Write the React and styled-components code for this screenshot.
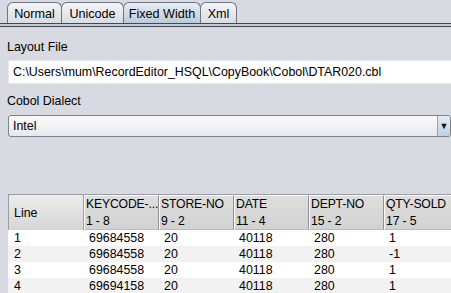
import React from 'react'
import styled, { createGlobalStyle } from "styled-components"

const tabs = ["Normal", "Unicode", "Fixed Width", "Xml"]
const tabWidths = [55, 63, 78, 37]

const columns = [
    { name: "KEYCODE-...", pos: "1 - 8" },
    { name: "STORE-NO", pos: "9 - 2" },
    { name: "DATE", pos: "11 - 4" },
    { name: "DEPT-NO", pos: "15 - 2" },
    { name: "QTY-SOLD", pos: "17 - 5" },
]

const rows = [
    ["1", "69684558", "20", "40118", "280", "1"],
    ["2", "69684558", "20", "40118", "280", "-1"],
    ["3", "69684558", "20", "40118", "280", "1"],
    ["4", "69694158", "20", "40118", "280", "1"],
]

export default function App() {
  return (
    <Page>
        <GlobalStyle />
        <TabBar>
            {tabs.map((t, i) => (
                <Tab key={t} $active={t === "Fixed Width"} $w={tabWidths[i]}>{t}</Tab>
            ))}
        </TabBar>
        <TabLine />
        <Content>
            <Label>Layout File</Label>
            <TextField>C:\Users\mum\RecordEditor_HSQL\CopyBook\Cobol\DTAR020.cbl</TextField>
            <Label $gap={9}>Cobol Dialect</Label>
            <Combo>
                <ComboText>Intel</ComboText>
                <ComboButton>▼</ComboButton>
            </Combo>
            <Table>
                <HeaderRow>
                    <LineHeader>Line</LineHeader>
                    {columns.map((c) => (
                        <ColHeader key={c.name}>
                            <span>{c.name}</span>
                            <span>{c.pos}</span>
                        </ColHeader>
                    ))}
                </HeaderRow>
                {rows.map((r, i) => (
                    <Row key={i} $odd={i % 2 === 1}>
                        {r.map((v, j) => (
                            <Cell key={j} $first={j === 0}>{v}</Cell>
                        ))}
                    </Row>
                ))}
            </Table>
        </Content>
    </Page>
  )
}

const GlobalStyle = createGlobalStyle`
    body {
        margin : 0;
        background : #d7dae0;
        font-family : "Liberation Sans", Arial, sans-serif;
        font-size : 12.4px;
        color : #000;
    }
`
const Page = styled.div`
    width : 451px;
    height : 293px;
    overflow : hidden;
    background : #d7dae0;
`
const TabBar = styled.div`
    display : flex;
    align-items : flex-end;
    height : 23px;
    padding-left : 7px;
`
const Tab = styled.div`
    width : ${(p) => p.$w}px;
    height : 21px;
    box-sizing : border-box;
    display : flex;
    align-items : center;
    justify-content : center;
    padding-top : 1px;
    border : 1px solid #6f7580;
    border-bottom : none;
    border-radius : 6px 6px 0 0;
    margin-right : -1px;
    font-size : 12.6px;
    background : ${(p) => p.$active
        ? "linear-gradient(#e6ecf3, #bccad9)"
        : "linear-gradient(#f4f5f7, #d9dce1)"};
`
const TabLine = styled.div`
    height : 2px;
    border-top : 1px solid #434852;
    border-bottom : 1px solid #434852;
    background : #c3cdda;
`
const Content = styled.div`
    padding : 12px 0 0 8px;
`
const Label = styled.div`
    height : 16px;
    line-height : 16px;
    margin-top : ${(p) => p.$gap || 0}px;
    margin-left : -1px;
`
const TextField = styled.div`
    margin-top : 5px;
    width : 460px;
    height : 24px;
    box-sizing : border-box;
    background : #fff;
    border : 1px solid #e6e8ec;
    padding-left : 4px;
    display : flex;
    align-items : center;
    white-space : nowrap;
`
const Combo = styled.div`
    margin-top : 6px;
    width : 443px;
    height : 22px;
    box-sizing : border-box;
    border : 1px solid #7d828b;
    border-radius : 3px;
    display : flex;
    background : linear-gradient(#fbfbfc, #e6e8ec);
    overflow : hidden;
`
const ComboText = styled.div`
    flex : 1;
    display : flex;
    align-items : center;
    padding-left : 4px;
`
const ComboButton = styled.div`
    width : 12px;
    border-left : 1px solid #9aa3b0;
    background : linear-gradient(#e4ebf3, #c4d0de);
    display : flex;
    align-items : center;
    justify-content : center;
    font-size : 9px;
    color : #111;
`
const Table = styled.div`
    margin-top : 57px;
    background : #fff;
    width : 460px;
`
const HeaderRow = styled.div`
    display : grid;
    grid-template-columns : 76px repeat(5, 75px);
    height : 36px;
    border-top : 1px solid #9a9da3;
    box-sizing : border-box;
`
const LineHeader = styled.div`
    box-sizing : border-box;
    border-right : 1px solid #9a9da3;
    border-left : 1px solid #9a9da3;
    background : linear-gradient(#ececec, #d6d6d6);
    display : flex;
    align-items : center;
    padding-left : 5px;
`
const ColHeader = styled.div`
    box-sizing : border-box;
    border : 1px solid #fafafa;
    border-right-color : #8e9197;
    border-bottom-color : #bcbcbc;
    background : linear-gradient(#dedede, #d2d2d2);
    display : flex;
    flex-direction : column;
    justify-content : center;
    padding-left : 1px;
    line-height : 17px;
    font-size : 12.2px;
    letter-spacing : -0.15px;
    white-space : nowrap;
    overflow : hidden;
`
const Row = styled.div`
    display : grid;
    grid-template-columns : 76px repeat(5, 75px);
    height : 16px;
    background : ${(p) => p.$odd ? "#f2f2f2" : "#fff"};
`
const Cell = styled.div`
    line-height : 16px;
    padding-left : ${(p) => p.$first ? 6 : 5}px;
`
